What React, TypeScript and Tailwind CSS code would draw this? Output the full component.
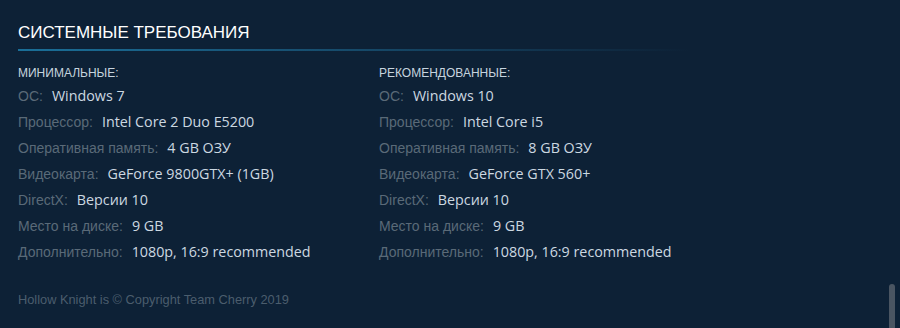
const MIN = [
  ['ОС:', 'Windows 7'],
  ['Процессор:', 'Intel Core 2 Duo E5200'],
  ['Оперативная память:', '4 GB ОЗУ'],
  ['Видеокарта:', 'GeForce 9800GTX+ (1GB)'],
  ['DirectX:', 'Версии 10'],
  ['Место на диске:', '9 GB'],
  ['Дополнительно:', '1080p, 16:9 recommended'],
];

const REC = [
  ['ОС:', 'Windows 10'],
  ['Процессор:', 'Intel Core i5'],
  ['Оперативная память:', '8 GB ОЗУ'],
  ['Видеокарта:', 'GeForce GTX 560+'],
  ['DirectX:', 'Версии 10'],
  ['Место на диске:', '9 GB'],
  ['Дополнительно:', '1080p, 16:9 recommended'],
];

function Column({ title, rows }: { title: string; rows: string[][] }) {
  return (
    <div className="w-[361px]">
      <p className="text-[12px] uppercase text-[#c6d4df] leading-[16px] mb-[4px]">{title}</p>
      <ul>
        {rows.map(([label, value], i) => (
          <li key={i} className="flex items-baseline h-[26px] text-[14px]">
            <span className="text-[#5a6a78]">{label}</span>
            <span className="ml-[9px] text-[#ccd8e1] font-['Open_Sans','Liberation_Sans',sans-serif] text-[14.3px]">{value}</span>
          </li>
        ))}
      </ul>
    </div>
  );
}

export default function App() {
  return (
    <div className="relative w-[900px] h-[328px] overflow-hidden bg-[#0d2136] font-['Liberation_Sans',Arial,sans-serif]">
      <div className="pl-[18px] pt-[22px]">
        <h2 className="text-[17px] leading-[22px] text-white uppercase">Системные требования</h2>
        <div className="mt-[5px] h-[2px] w-[672px] bg-gradient-to-r from-[#1a6f98] via-[#164a6a] to-transparent" />

        <div className="flex mt-[14px]">
          <Column title="Минимальные:" rows={MIN} />
          <Column title="Рекомендованные:" rows={REC} />
        </div>

        <p className="mt-[23px] text-[12.8px] text-[#4b5d6d]">Hollow Knight is © Copyright Team Cherry 2019</p>
      </div>

      {/* scrollbar thumb */}
      <div className="absolute right-[5px] top-[284px] w-[6px] h-[50px] rounded-full bg-[#4a5562]" />
    </div>
  );
}
